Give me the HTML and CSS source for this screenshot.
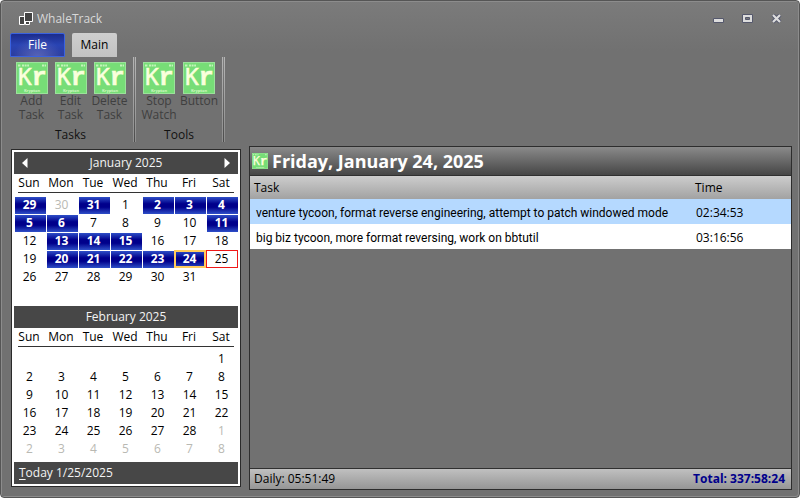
FILE: index.html
```html
<!DOCTYPE html>
<html lang="en">
<head>
<meta charset="utf-8">
<title>WhaleTrack</title>
<link rel="stylesheet" href="styles.css">
</head>
<body>
<svg class="defs" viewBox="0 0 32 32" aria-hidden="true">
  <symbol id="kr" viewBox="0 0 32 32">
    <rect width="32" height="32" fill="#9be29b"/>
    <rect x="1" y="1" width="30" height="30" fill="#77dd77"/>
    <path d="M2 3.500h3M6 3.500h7M26 3.500h4" stroke="#c4f3ba" stroke-width="2" stroke-dasharray="2 .6"/>
    <text class="kr" x="2" y="23"><tspan class="kr-k">K</tspan><tspan class="kr-r">r</tspan></text>
    <text class="kr-name" x="16" y="30">Krypton</text>
  </symbol>
</svg>
<div class="window">
  <header class="titlebar">
    <svg class="app-icon" viewBox="0 0 14 14" aria-hidden="true"><path d="M5.500.5h8v9h-8zM.5 4.500h5v8h-5zM6.500 9.500h4v3h-4z" fill="#444" stroke="#fff"/></svg>
    <h1>WhaleTrack</h1>
    <div class="window-buttons">
      <button aria-label="Minimize"><svg viewBox="0 0 11 10"><path d="M.5 4.500h10v4h-10z" fill="#ddd" stroke="#55586c"/></svg></button>
      <button aria-label="Maximize"><svg viewBox="0 0 11 10"><path d="M.5.5h10v8h-10z" fill="#ddd" stroke="#55586c"/><path d="M3.500 3.500h4v2h-4z" fill="#777" stroke="#55586c"/></svg></button>
      <button aria-label="Close"><svg viewBox="0 0 11 10"><path d="M2 1l7 7M9 1l-7 7" stroke="#55586c" stroke-width="4"/><path d="M2 1l7 7M9 1l-7 7" stroke="#ddd" stroke-width="2.200"/></svg></button>
    </div>
  </header>
  <nav class="tabs">
    <button class="tab file">File</button>
    <button class="tab main">Main</button>
  </nav>
  <div class="ribbon">
    <section class="group">
      <div class="tools">
        <button class="tool"><svg><use href="#kr"/></svg><span>Add Task</span></button>
        <button class="tool"><svg><use href="#kr"/></svg><span>Edit Task</span></button>
        <button class="tool"><svg><use href="#kr"/></svg><span>Delete Task</span></button>
      </div>
      <h2>Tasks</h2>
    </section>
    <section class="group wide">
      <div class="tools">
        <button class="tool"><svg><use href="#kr"/></svg><span>Stop Watch</span></button>
        <button class="tool"><svg><use href="#kr"/></svg><span>Button</span></button>
      </div>
      <h2>Tools</h2>
    </section>
  </div>
  <main>
    <aside class="calendar">
      <div class="month-bar">
        <button aria-label="Previous month"><svg viewBox="0 0 6 10"><path d="M5.500 0v10L0 5z" fill="#fff"/></svg></button>
        <h2>January 2025</h2>
        <button aria-label="Next month"><svg viewBox="0 0 6 10"><path d="M.5 0v10L6 5z" fill="#fff"/></svg></button>
      </div>
      <table class="month">
        <thead><tr><th>Sun</th><th>Mon</th><th>Tue</th><th>Wed</th><th>Thu</th><th>Fri</th><th>Sat</th></tr></thead>
        <tbody>
          <tr><td class="on">29</td><td class="out">30</td><td class="on">31</td><td>1</td><td class="on">2</td><td class="on">3</td><td class="on">4</td></tr>
          <tr><td class="on">5</td><td class="on">6</td><td>7</td><td>8</td><td>9</td><td>10</td><td class="on">11</td></tr>
          <tr><td>12</td><td class="on">13</td><td class="on">14</td><td class="on">15</td><td>16</td><td>17</td><td>18</td></tr>
          <tr><td>19</td><td class="on">20</td><td class="on">21</td><td class="on">22</td><td class="on">23</td><td class="on selected">24</td><td class="today">25</td></tr>
          <tr><td>26</td><td>27</td><td>28</td><td>29</td><td>30</td><td>31</td><td></td></tr>
          <tr><td></td><td></td><td></td><td></td><td></td><td></td><td></td></tr>
        </tbody>
      </table>
      <div class="month-bar"><h2>February 2025</h2></div>
      <table class="month">
        <thead><tr><th>Sun</th><th>Mon</th><th>Tue</th><th>Wed</th><th>Thu</th><th>Fri</th><th>Sat</th></tr></thead>
        <tbody>
          <tr><td></td><td></td><td></td><td></td><td></td><td></td><td>1</td></tr>
          <tr><td>2</td><td>3</td><td>4</td><td>5</td><td>6</td><td>7</td><td>8</td></tr>
          <tr><td>9</td><td>10</td><td>11</td><td>12</td><td>13</td><td>14</td><td>15</td></tr>
          <tr><td>16</td><td>17</td><td>18</td><td>19</td><td>20</td><td>21</td><td>22</td></tr>
          <tr><td>23</td><td>24</td><td>25</td><td>26</td><td>27</td><td>28</td><td class="out">1</td></tr>
          <tr><td class="out">2</td><td class="out">3</td><td class="out">4</td><td class="out">5</td><td class="out">6</td><td class="out">7</td><td class="out">8</td></tr>
        </tbody>
      </table>
      <button class="go-today"><u>T</u>oday 1/25/2025</button>
    </aside>
    <section class="panel">
      <div class="panel-head"><svg><use href="#kr"/></svg><h2>Friday, January 24, 2025</h2></div>
      <table class="tasks">
        <thead><tr><th>Task</th><th class="time">Time</th></tr></thead>
        <tbody>
          <tr class="picked"><td class="name">venture tycoon, format reverse engineering, attempt to patch windowed mode</td><td>02:34:53</td></tr>
          <tr><td class="name">big biz tycoon, more format reversing, work on bbtutil</td><td>03:16:56</td></tr>
        </tbody>
      </table>
      <footer><span>Daily: 05:51:49</span><strong>Total: 337:58:24</strong></footer>
    </section>
  </main>
</div>
</body>
</html>
```
FILE: styles.css
```css
* { box-sizing: border-box; }
body {
  margin: 0;
  background: #fff;
  color: #000;
  font: 12px/16px "Open Sans", "Noto Sans", sans-serif;
}
h1, h2 { margin: 0; font: inherit; }
button { margin: 0; padding: 0; border: 0; background: none; color: inherit; font: inherit; }
svg { display: block; }
.defs { display: none; }
.kr { fill: #faffdc; stroke: #faffdc; stroke-width: .5; }
.kr-k { font: 23px "DejaVu Sans Mono", monospace; }
.kr-r { font: bold 25px "Liberation Mono", monospace; }
.kr-name { font: bold 4px "Open Sans", sans-serif; fill: #d2f7c4; text-anchor: middle; }

.window {
  display: flex;
  flex-direction: column;
  min-height: 100vh;
  padding: 0 7px 7px 10px;
  border: 1px solid #555;
  border-radius: 4px;
  background: linear-gradient(#7b7b7b, #717171 50px);
  box-shadow: inset 1px 1px #8c8c8c, inset -1px -1px #8c8c8c;
}

.titlebar { display: flex; align-items: center; height: 32px; padding: 3px 10px 0 8px; color: #d8d8d8; }
.app-icon { width: 14px; height: 14px; margin-right: 4px; }
.window-buttons { display: flex; gap: 18px; margin-left: auto; }
.window-buttons svg { width: 11px; height: 10px; }

.tabs { display: flex; gap: 7px; height: 24px; margin-left: -1px; }
.tab { border-radius: 2px 2px 0 0; }
.file {
  width: 55px;
  border: 1px solid #3a62e0;
  background: radial-gradient(ellipse at 50% 110%, #5a66b8, transparent 65%), linear-gradient(#1c2c8c, #2944b4 50%, #2c3d9e);
  color: #fff;
}
.main { width: 45px; background: linear-gradient(#cecece, #c2c2c2); }

.ribbon { display: flex; height: 85px; }
.group {
  display: flex;
  flex-direction: column;
  padding: 5px 7px 0 1px;
  background:
    linear-gradient(#b4b4b4, #8e8e8e) right 2px top / 1px 100% no-repeat,
    linear-gradient(#808080, #4c4c4c) right 1px top / 1px 100% no-repeat,
    linear-gradient(#b4b4b4, #8e8e8e) right top / 1px 100% no-repeat;
}
.tools { display: flex; flex: 1; align-items: flex-start; }
.tool { display: flex; flex-direction: column; align-items: center; width: 39px; color: #3f3f3f; line-height: 14px; }
.wide { padding: 5px 6px 0 3px; }
.wide .tool { width: 40px; }
.tool svg { width: 32px; height: 32px; }
.group h2 { text-align: center; line-height: 14px; color: #111; }

main { display: flex; flex: 1; align-items: stretch; gap: 8px; padding-top: 4px; }
.calendar {
  align-self: flex-start;
  width: 230px;
  margin-top: 3px;
  padding: 2px;
  border: 1px solid #2a2a2a;
  background: #fff;
}
.month-bar { display: flex; align-items: center; height: 22px; padding: 0 8px; background: #474747; color: #f4f4f4; }
.month-bar h2 { flex: 1; text-align: center; }
.month-bar svg { width: 6px; height: 10px; }
.month {
  width: 100%;
  margin-bottom: 2px;
  border-spacing: 0;
  table-layout: fixed;
  text-align: center;
  background: linear-gradient(#333, #333) 4px 18px / calc(100% - 8px) 1px no-repeat;
}
.month th { height: 22px; padding: 0 2px 4px 0; font-weight: normal; text-align: center; }
.month td {
  height: 18px;
  padding: 0 2px 1px 0;
  border: solid transparent;
  border-width: 1px 0 0 1px;
  line-height: 16px;
  background-clip: padding-box;
}
.month .out { color: #b9b9b3; }
.month .on { background: linear-gradient(#2e4fc8, #00008b 40% 60%, #2e4fc8) padding-box; color: #fff; font-weight: bold; }
.month .selected { outline: 2px solid #ffcb5c; outline-offset: -2px; }
.month .today { outline: 1px solid #f01818; outline-offset: -1px; }
.go-today { display: block; width: 100%; height: 22px; margin-top: 4px; padding: 0 5px; background: #474747; color: #f4f4f4; text-align: left; }
.go-today u { text-underline-offset: 2px; }

.panel { display: flex; flex: 1; flex-direction: column; min-width: 0; border: 1px solid #2d2d2d; background: #717171; }
.panel-head { display: flex; align-items: center; gap: 4px; height: 29px; padding: 0 2px; border-bottom: 1px solid #303030; background: linear-gradient(#8a8a8a, #464646); color: #fff; }
.panel-head svg { width: 16px; height: 16px; }
.panel-head h2 { font-size: 18px; font-weight: bold; line-height: 24px; }
.tasks { width: 100%; border-spacing: 0; table-layout: fixed; }
.tasks th { height: 23px; padding: 0 4px; font-weight: normal; text-align: left; }
.tasks thead { background: linear-gradient(#cdcdcd, #a2a2a2); }
.tasks .time { width: 100px; }
.tasks td { height: 25px; padding: 2px 5px 0; background: #fff; white-space: nowrap; }
.tasks .name { padding-left: 6px; font-family: Roboto, "Open Sans", sans-serif; }
.tasks .picked td { background: #b5d9ff; }
.panel footer { display: flex; align-items: center; justify-content: space-between; height: 21px; margin-top: auto; padding: 0 6px 0 4px; border-top: 1px solid #303030; background: linear-gradient(#c0c0c0, #969696); }
.panel strong { color: #00008b; }
```
